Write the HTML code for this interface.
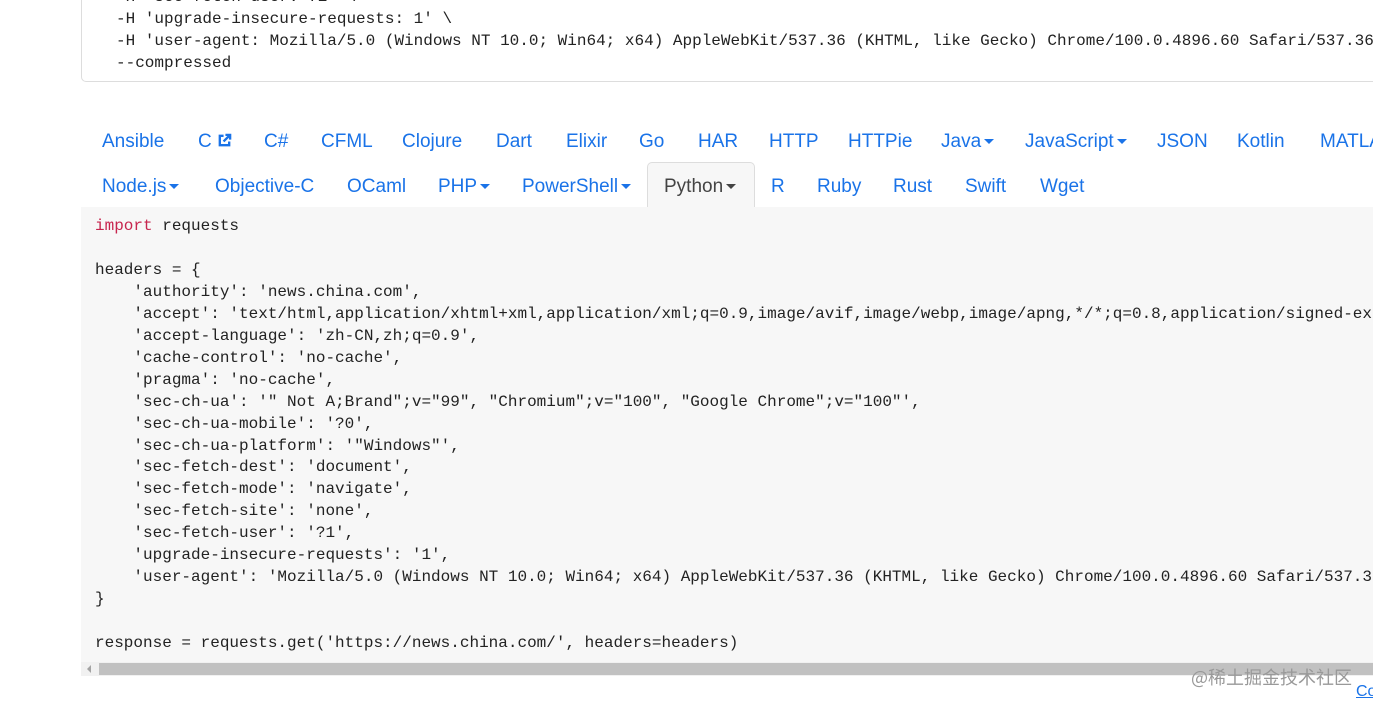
<!DOCTYPE html>
<html><head><meta charset="utf-8"><style>
html,body{margin:0;width:1373px;height:707px;overflow:hidden}
body{background:#fff;position:relative;font-family:"Liberation Sans",sans-serif}
.top{position:absolute;left:81px;top:-10px;width:1291px;height:90px;border:1px solid #ddd;border-right:none;border-radius:5px 0 0 5px;background:#fff;overflow:hidden}
pre{margin:0;font-family:"Liberation Mono",monospace;font-size:16px;line-height:21.95px;color:#222;white-space:pre}
.top pre{position:absolute;left:34px;top:-4px}
.t{position:absolute;font-size:19px;color:#1a73e8;line-height:24px;white-space:nowrap}
.car{display:inline-block;width:0;height:0;border-left:5px solid transparent;border-right:5px solid transparent;border-top:5px solid currentColor;vertical-align:middle;margin-left:3px}
.py{position:absolute;left:647px;top:162px;width:106px;height:46px;background:#f7f7f7;border:1px solid #ddd;border-bottom:none;border-radius:5px 5px 0 0}
.code{position:absolute;left:81px;top:207px;width:1292px;height:469px;background:#f7f7f7;overflow:hidden}
.code pre{position:absolute;left:14px;top:9px}
.k{color:#c7254e}
.sb{position:absolute;left:81px;top:662px;width:1292px;height:14px;background:#f1f1f1}
.th{position:absolute;left:18px;top:1px;right:0;height:12px;background:#c1c1c1}
.wm{position:absolute;left:1191px;top:664px;font-family:"Noto Sans CJK SC",sans-serif;font-size:18px;color:#999;white-space:nowrap}
.co{position:absolute;left:1356px;top:683px;font-size:16px;color:#1a73e8;text-decoration:underline;width:17px;overflow:hidden}
.clip{position:absolute;left:0;top:0;width:1373px;height:707px;overflow:hidden}
</style></head><body><div class="clip">
<div class="top"><pre>-H 'sec-fetch-user: ?1' \
-H 'upgrade-insecure-requests: 1' \
-H 'user-agent: Mozilla/5.0 (Windows NT 10.0; Win64; x64) AppleWebKit/537.36 (KHTML, like Gecko) Chrome/100.0.4896.60 Safari/537.36' \
--compressed</pre></div>

<div class="t" style="left:102px;top:130px">Ansible</div>
<div class="t" style="left:198px;top:130px">C <svg width="15" height="15" viewBox="0 0 16 16" style="vertical-align:-1px"><path d="M7 3H3v10h10V9" fill="none" stroke="#1a73e8" stroke-width="2.5"/><path d="M9 2h5v5M14 2L7 9" fill="none" stroke="#1a73e8" stroke-width="2.5"/></svg></div>
<div class="t" style="left:264px;top:130px">C#</div>
<div class="t" style="left:321px;top:130px">CFML</div>
<div class="t" style="left:402px;top:130px">Clojure</div>
<div class="t" style="left:496px;top:130px">Dart</div>
<div class="t" style="left:566px;top:130px">Elixir</div>
<div class="t" style="left:639px;top:130px">Go</div>
<div class="t" style="left:698px;top:130px">HAR</div>
<div class="t" style="left:769px;top:130px">HTTP</div>
<div class="t" style="left:848px;top:130px">HTTPie</div>
<div class="t" style="left:941px;top:130px">Java<span class="car"></span></div>
<div class="t" style="left:1025px;top:130px">JavaScript<span class="car"></span></div>
<div class="t" style="left:1157px;top:130px">JSON</div>
<div class="t" style="left:1237px;top:130px">Kotlin</div>
<div class="t" style="left:1320px;top:130px">MATLAB</div>

<div class="py"></div>
<div class="t" style="left:102px;top:175px">Node.js<span class="car"></span></div>
<div class="t" style="left:215px;top:175px">Objective-C</div>
<div class="t" style="left:347px;top:175px">OCaml</div>
<div class="t" style="left:438px;top:175px">PHP<span class="car"></span></div>
<div class="t" style="left:522px;top:175px">PowerShell<span class="car"></span></div>
<div class="t" style="left:664px;top:175px;color:#444">Python<span class="car"></span></div>
<div class="t" style="left:771px;top:175px">R</div>
<div class="t" style="left:817px;top:175px">Ruby</div>
<div class="t" style="left:893px;top:175px">Rust</div>
<div class="t" style="left:965px;top:175px">Swift</div>
<div class="t" style="left:1040px;top:175px">Wget</div>

<div class="code"><pre><span class="k">import</span> requests

headers = {
    'authority': 'news.china.com',
    'accept': 'text/html,application/xhtml+xml,application/xml;q=0.9,image/avif,image/webp,image/apng,*/*;q=0.8,application/signed-exchange;v=b3;q=0.9',
    'accept-language': 'zh-CN,zh;q=0.9',
    'cache-control': 'no-cache',
    'pragma': 'no-cache',
    'sec-ch-ua': '" Not A;Brand";v="99", "Chromium";v="100", "Google Chrome";v="100"',
    'sec-ch-ua-mobile': '?0',
    'sec-ch-ua-platform': '"Windows"',
    'sec-fetch-dest': 'document',
    'sec-fetch-mode': 'navigate',
    'sec-fetch-site': 'none',
    'sec-fetch-user': '?1',
    'upgrade-insecure-requests': '1',
    'user-agent': 'Mozilla/5.0 (Windows NT 10.0; Win64; x64) AppleWebKit/537.36 (KHTML, like Gecko) Chrome/100.0.4896.60 Safari/537.36',
}

response = requests.get('https://news.china.com/', headers=headers)</pre></div>
<div class="sb"><span style="position:absolute;left:6px;top:3px;width:0;height:0;border-top:4px solid transparent;border-bottom:4px solid transparent;border-right:4px solid #a3a3a3"></span><div class="th"></div></div>
<div class="wm">@稀土掘金技术社区</div>
<div class="co">Co</div>
</div></body></html>
